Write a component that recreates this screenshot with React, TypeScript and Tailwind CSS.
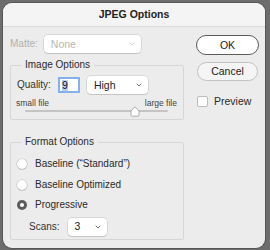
import { ChevronDown } from "lucide-react";

function Select({ value, width, disabled }: { value: string; width: string; disabled?: boolean }) {
  return (
    <div
      className={`flex items-center justify-between h-[18px] ${width} rounded-[4px] bg-white pl-[7px] pr-[5px] shadow-[0_0_0_0.5px_rgba(0,0,0,0.16),0_1px_1px_rgba(0,0,0,0.1)] ${
        disabled ? "text-[#b8b8b8]" : "text-[#222]"
      }`}
    >
      <span className="text-[10.5px] leading-none">{value}</span>
      <ChevronDown size={8} strokeWidth={2.5} className={disabled ? "text-[#cacaca]" : "text-[#555]"} />
    </div>
  );
}

function Radio({ label, checked }: { label: string; checked?: boolean }) {
  return (
    <div className="flex items-center gap-[8px] h-[20.5px]">
      {checked ? (
        <span className="w-[10px] h-[10px] rounded-full bg-[#5c5c5c] flex items-center justify-center">
          <span className="w-[4px] h-[4px] rounded-full bg-white" />
        </span>
      ) : (
        <span className="w-[10px] h-[10px] rounded-full bg-white shadow-[0_0_0_0.5px_rgba(0,0,0,0.22),0_1px_1px_rgba(0,0,0,0.08)]" />
      )}
      <span className="text-[10px] leading-none text-[#2a2a2a]">{label}</span>
    </div>
  );
}

export default function App() {
  return (
    <div
      className="w-[270px] h-[250px] bg-[#6d6d6d] pl-[3px] pt-[3px] overflow-hidden"
      style={{ fontFamily: "'Liberation Sans', Arial, sans-serif" }}
    >
      <div className="w-[262px] h-[245px] rounded-[9px] bg-[#ececec] overflow-hidden shadow-[0_0_0_1px_rgba(0,0,0,0.2)]">
        {/* Title bar */}
        <div className="h-[24px] bg-[#f4f4f4] border-b border-[#dadada] flex items-center justify-center">
          <span className="text-[10.5px] leading-none font-bold text-[#222]">JPEG Options</span>
        </div>

        <div className="flex">
          {/* Left column */}
          <div className="w-[181px] pl-[7px] pt-[8px]">
            <div className="flex items-center h-[18px] gap-[6px] pl-[-1px]">
              <span className="text-[10px] leading-none text-[#b0b0b0]">Matte:</span>
              <Select value="None" width="w-[97px]" disabled />
            </div>

            <fieldset className="mt-[6px] w-[174px] h-[61px] border border-[#d6d6d6] rounded-[2px] px-[6px]">
              <legend className="ml-[4px] px-[4px] text-[10px] leading-[12px] text-[#2a2a2a]">Image Options</legend>
              <div className="flex items-center h-[18px] mt-[5px]">
                <span className="text-[10px] leading-none text-[#333]">Quality:</span>
                <div className="ml-[7px] w-[22px] h-[16px] bg-white border-[2px] border-[#86b0ec] flex items-center pl-[2px]">
                  <span className="text-[10.5px] leading-[11px] text-[#111] bg-[#b6d1f5]">9</span>
                </div>
                <div className="ml-[7px]">
                  <Select value="High" width="w-[61px]" />
                </div>
              </div>
              <div className="flex justify-between mt-[4px] text-[8.5px] leading-[10px] text-[#444]">
                <span className="-ml-[1px]">small file</span>
                <span>large file</span>
              </div>
              <div className="relative mt-[0px] ml-[8px] mr-[9px] h-[10px]">
                <div className="absolute left-0 right-0 top-[2px] h-[2px] rounded-full bg-[#c4c4c4]" />
                <svg className="absolute left-[105px] top-[-2px]" width="10" height="11" viewBox="0 0 10 11">
                  <path d="M5 0.8 L9 5 V9.2 a1 1 0 0 1 -1 1 H2 a1 1 0 0 1 -1 -1 V5 Z" fill="#fff" stroke="#9a9a9a" strokeWidth="0.8" />
                </svg>
              </div>
            </fieldset>

            <fieldset className="mt-[16px] w-[174px] h-[104px] border border-[#d6d6d6] rounded-[2px] px-[6px]">
              <legend className="ml-[4px] px-[4px] text-[10px] leading-[12px] text-[#2a2a2a]">Format Options</legend>
              <div className="flex flex-col mt-[6px]">
                <Radio label={"Baseline (\u201cStandard\u201d)"} />
                <Radio label="Baseline Optimized" />
                <Radio label="Progressive" checked />
              </div>
              <div className="flex items-center gap-[8px] mt-[2px] pl-[12px]">
                <span className="text-[10px] leading-none text-[#333]">Scans:</span>
                <Select value="3" width="w-[39px]" />
              </div>
            </fieldset>
          </div>

          {/* Right column */}
          <div className="flex flex-col pl-[12px] pt-[8px]">
            <button className="w-[63px] h-[20px] rounded-full bg-white border border-[#5a5a5a] text-[10.5px] leading-none text-[#222]">
              OK
            </button>
            <button className="mt-[7px] ml-[1px] w-[61px] h-[19px] rounded-full bg-[#f5f5f5] border border-[#c2c2c2] text-[10.5px] leading-none text-[#222]">
              Cancel
            </button>
            <div className="mt-[15px] ml-[1px] flex items-center gap-[6px]">
              <span className="w-[11px] h-[11px] rounded-[2px] bg-white border border-[#bcbcbc]" />
              <span className="text-[10.5px] leading-none text-[#2a2a2a]">Preview</span>
            </div>
          </div>
        </div>
      </div>
    </div>
  );
}
